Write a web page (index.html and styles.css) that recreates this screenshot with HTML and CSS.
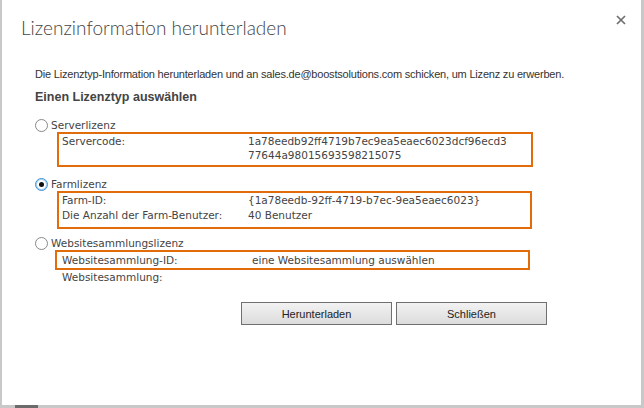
FILE: index.html
```html
<!DOCTYPE html>
<html>
<head>
  <title>Lizenzinformation herunterladen</title>
  <meta charset="utf-8">
  <link rel="stylesheet" href="styles.css">
</head>
<body>
  <div class="dialog">
    <div class="title-row">
      <h1 class="title">Lizenzinformation herunterladen</h1>
      <span class="close">
        <svg width="10" height="10" viewBox="0 0 10 10"><path d="M1 1 L9 9 M9 1 L1 9" stroke="#6e6e6e" stroke-width="1.7"/></svg>
      </span>
    </div>
    <div class="content">
      <p class="intro">Die Lizenztyp-Information herunterladen und an sales.de@boostsolutions.com schicken, um Lizenz zu erwerben.</p>
      <div class="heading">Einen Lizenztyp auswählen</div>

      <div class="option option-first"><span class="radio"></span>Serverlizenz</div>
      <div class="box box-server">
        <div class="grid">
          <span>Servercode:</span>
          <span>1a78eedb92ff4719b7ec9ea5eaec6023dcf96ecd3<br>77644a98015693598215075</span>
        </div>
      </div>

      <div class="option"><span class="radio checked"></span>Farmlizenz</div>
      <div class="box box-farm">
        <div class="grid">
          <span>Farm-ID:</span>
          <span>{1a78eedb-92ff-4719-b7ec-9ea5eaec6023}</span>
          <span>Die Anzahl der Farm-Benutzer:</span>
          <span>40 Benutzer</span>
        </div>
      </div>

      <div class="option"><span class="radio"></span>Websitesammlungslizenz</div>
      <div class="box box-site">
        <div class="grid">
          <span>Websitesammlung-ID:</span>
          <span>eine Websitesammlung auswählen</span>
        </div>
      </div>
      <div class="after-box">Websitesammlung:</div>

      <div class="buttons">
        <button class="btn">Herunterladen</button>
        <button class="btn">Schließen</button>
      </div>
    </div>
    <div class="scroll-mark"></div>
  </div>
</body>
</html>
```

FILE: styles.css
```css
html, body {
  margin: 0;
  padding: 0;
  background-color: #ffffff;
}
.dialog {
  width: 644px;
  height: 408px;
  box-sizing: border-box;
  border-left: 2px solid #c8c8c8;
  border-right: 3px solid #c8c8c8;
  border-bottom: 3px solid #c8c8c8;
  position: relative;
  color: #444;
  font-family: "DejaVu Sans", Verdana, sans-serif;
}
.title-row {
  display: flex;
  justify-content: space-between;
  align-items: flex-start;
  padding: 16px 0 0 19px;
}
.title {
  margin: 0;
  font-family: Lato, "Open Sans", sans-serif;
  font-weight: 300;
  font-size: 19px;
  line-height: 24px;
  color: #444;
}
.close {
  display: flex;
  margin: -1px 15px 0 0;
}
.content {
  padding-left: 33px;
}
.intro {
  margin: 27px 0 0 0;
  font-family: "Liberation Sans", Arial, sans-serif;
  font-size: 11px;
  line-height: 14px;
  letter-spacing: -0.2px;
  color: #333;
}
.heading {
  margin-top: 8px;
  font-family: "Liberation Sans", Arial, sans-serif;
  font-weight: bold;
  font-size: 12.5px;
  line-height: 16px;
  color: #444;
}
.option {
  display: flex;
  align-items: center;
  height: 14px;
  font-size: 10.5px;
  color: #444;
}
.option-first {
  margin-top: 13px;
}
.radio {
  width: 11px;
  height: 11px;
  border: 1px solid #888;
  border-radius: 50%;
  box-sizing: content-box;
  margin-right: 3px;
  position: relative;
  background: #fff;
}
.radio.checked {
  border-color: #3c8fd0;
  box-shadow: inset 0 0 0 1px #a9cdec;
}
.radio.checked::after {
  content: "";
  position: absolute;
  left: 3px;
  top: 3px;
  width: 5px;
  height: 5px;
  border-radius: 50%;
  background: #111;
}
.box {
  border: 2px solid #e36c0a;
  box-sizing: border-box;
  font-size: 10.5px;
  color: #444;
}
.grid {
  display: grid;
  grid-template-columns: 186px 1fr;
}
.box-server {
  margin: 0 0 10px 22px;
  width: 476px;
  padding: 0 0 3px 3px;
  line-height: 14px;
}
.box-farm {
  margin: 0 0 7px 22px;
  width: 475px;
  padding: 0 0 4px 3px;
  line-height: 15px;
}
.box-site {
  margin: 0 0 0 20px;
  width: 475px;
  padding: 0 0 0 5px;
  line-height: 16px;
}
.box-site .grid {
  grid-template-columns: 190px 1fr;
}
.after-box {
  margin-left: 27px;
  font-size: 10.5px;
  line-height: 14px;
}
.buttons {
  display: flex;
  gap: 4px;
  margin: 18px 0 0 206px;
}
.btn {
  width: 151px;
  height: 23px;
  border: 1px solid #707070;
  background: linear-gradient(#f2f2f2, #dcdcdc);
  font-family: "Liberation Sans", Arial, sans-serif;
  font-size: 11px;
  color: #222;
  padding: 0;
}
.scroll-mark {
  position: absolute;
  left: 13px;
  bottom: -3px;
  width: 23px;
  height: 3px;
  background: #6b6b6b;
}
```
